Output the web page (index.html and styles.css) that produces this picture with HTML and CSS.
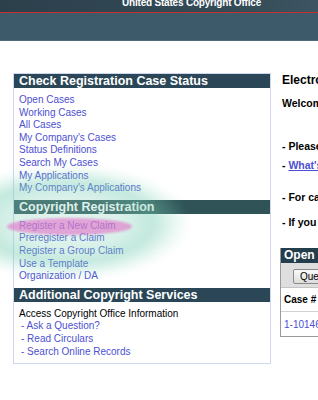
FILE: index.html
```html
<!DOCTYPE html>
<html lang="en">
<head>
  <meta charset="UTF-8" />
  <meta name="viewport" content="width=device-width, initial-scale=1.0"/>
  <title>eCO | United States Copyright Office</title>
  <link rel="stylesheet" href="styles.css">
</head>
<body>

  <!-- Banner -->
  <header class="banner">
    <div class="banner-top">
      <span class="banner-title">United States Copyright Office</span>
    </div>
    <div class="banner-bar"></div>
  </header>

  <div class="page">

    <!-- Left navigation -->
    <aside class="nav">
      <h3 class="nav-head">Check Registration Case Status</h3>
      <ul class="nav-list">
        <li><a href="#">Open Cases</a></li>
        <li><a href="#">Working Cases</a></li>
        <li><a href="#">All Cases</a></li>
        <li><a href="#">My Company's Cases</a></li>
        <li><a href="#">Status Definitions</a></li>
        <li><a href="#">Search My Cases</a></li>
        <li><a href="#">My Applications</a></li>
        <li><a href="#">My Company's Applications</a></li>
      </ul>

      <h3 class="nav-head nav-head-lit">Copyright Registration</h3>
      <ul class="nav-list">
        <li><a href="#">Register a New Claim</a></li>
        <li><a href="#">Preregister a Claim</a></li>
        <li><a href="#">Register a Group Claim</a></li>
        <li><a href="#">Use a Template</a></li>
        <li><a href="#">Organization / DA</a></li>
      </ul>

      <h3 class="nav-head">Additional Copyright Services</h3>
      <ul class="nav-list">
        <li class="nav-note">Access Copyright Office Information</li>
        <li class="nav-sub"><a href="#">- Ask a Question?</a></li>
        <li class="nav-sub"><a href="#">- Read Circulars</a></li>
        <li class="nav-sub"><a href="#">- Search Online Records</a></li>
      </ul>
    </aside>

    <!-- Main content -->
    <main class="content">
      <h2 class="content-title">Electronic Copyright Office</h2>
      <p class="welcome">Welcome to the Electronic Copyright Office (eCO)</p>

      <p class="note note-first">- Please disable pop-up blockers before using eCO.</p>
      <p class="note note-link">- <a href="#">What's new in eCO</a></p>
      <p class="note note-gap">- For case status, select Open Cases from the menu.</p>
      <p class="note">- If you have questions, contact the Copyright Office.</p>

      <div class="cases">
        <div class="cases-head">Open Cases</div>
        <div class="cases-tools">
          <button type="button">Query</button>
        </div>
        <div class="cases-row cases-row-head">
          <span class="col-case">Case #</span>
          <span>Title</span>
        </div>
        <div class="cases-row">
          <a class="col-case" href="#">1-101468231</a>
          <span>Untitled Work</span>
        </div>
      </div>
    </main>

  </div>

  <!-- Highlight overlays -->
  <div class="glow"></div>
  <div class="marker"></div>

</body>
</html>
```

FILE: styles.css
```css
* {
  box-sizing: border-box;
}

body, html {
  margin: 0;
  padding: 0;
  font-family: 'Liberation Sans', Arial, sans-serif;
  overflow: hidden;
  position: relative;
  color: #000;
  background: #fff;
}

a {
  color: #4d4fd2;
  text-decoration: none;
}

/* Banner */
.banner {
  width: 640px;
}

.banner-top {
  height: 13px;
  overflow: hidden;
  background: linear-gradient(90deg, #2c404c 0%, #354c59 40%, #4a6270 65%, #33495a 85%, #2e4452 100%);
  border-bottom: 1px solid #c8302c;
}

.banner-title {
  display: block;
  padding-left: 122px;
  margin-top: -2px;
  font-size: 10px;
  line-height: 10px;
  font-weight: bold;
  color: #fff;
  letter-spacing: -0.2px;
}

.banner-bar {
  height: 28px;
  background: #3d5a6a;
  border-bottom: 1px solid #4d6a7a;
}

/* Layout */
.page {
  display: flex;
  gap: 11px;
  padding: 32px 0 0 13px;
  width: 700px;
}

/* Left navigation */
.nav {
  width: 258px;
  flex: none;
  border: 1px solid #cfd6ef;
  background: #fff;
}

.nav-head {
  margin: 0;
  height: 14px;
  line-height: 14px;
  padding-left: 5px;
  background: #2b4757;
  color: #fff;
  font-size: 12.5px;
  font-weight: bold;
  white-space: nowrap;
}

.nav-head-lit {
  background: #2f5357;
}

.nav-list {
  list-style: none;
  margin: 0;
  padding: 6px 5px 5px;
  font-size: 10px;
  line-height: 12.6px;
}

.nav-note {
  color: #000;
}

.nav-sub {
  padding-left: 2px;
}

/* Right content */
.content {
  width: 380px;
  flex: none;
  white-space: nowrap;
}

.content-title {
  margin: 0;
  font-size: 12px;
  line-height: 15px;
}

.welcome {
  margin: 9px 0 0;
  font-size: 10.5px;
  line-height: 13px;
  font-weight: bold;
}

.note {
  margin: 12px 0 0;
  font-size: 10.5px;
  line-height: 13px;
  font-weight: bold;
}

.note-first {
  margin-top: 30px;
}

.note-link {
  margin-top: 6px;
}

.note-link a {
  text-decoration: underline;
}

.note-gap {
  margin-top: 19px;
}

/* Open cases table */
.cases {
  margin-top: 19px;
  margin-left: -2px;
  width: 330px;
  border: 1px solid #9a9a9a;
  border-top: none;
}

.cases-head {
  height: 15px;
  line-height: 15px;
  padding-left: 3px;
  background: #243e4c;
  color: #fff;
  font-size: 12px;
  font-weight: bold;
}

.cases-tools {
  padding: 3px 12px;
  background: #dedede;
  border-bottom: 1px solid #c4c4c4;
}

.cases-tools button {
  font-family: 'Liberation Sans', Arial, sans-serif;
  font-size: 10px;
  height: 15px;
  padding: 0 6px;
  border: 1px solid #8a8a8a;
  border-radius: 2px;
  background: linear-gradient(#fafafa, #dcdcdc);
  color: #000;
}

.cases-row {
  display: flex;
  align-items: center;
  height: 24px;
  padding-left: 3px;
  font-size: 10px;
  border-bottom: 1px solid #d2d2d2;
}

.cases-row:last-child {
  border-bottom: none;
}

.cases-row-head {
  font-weight: bold;
}

.col-case {
  width: 80px;
}

/* Highlight overlays */
.glow {
  position: absolute;
  left: -55px;
  top: 165px;
  width: 245px;
  height: 115px;
  border-radius: 50%;
  background: radial-gradient(ellipse closest-side, rgba(150, 215, 195, 0.28) 0%, rgba(140, 212, 190, 0.32) 45%, rgba(120, 205, 180, 0.45) 70%, rgba(140, 215, 190, 0.18) 88%, rgba(140, 215, 190, 0) 100%);
  filter: blur(3px);
  pointer-events: none;
}

.marker {
  position: absolute;
  left: 7px;
  top: 218px;
  width: 125px;
  height: 17px;
  border-radius: 50%;
  background: rgba(226, 115, 200, 0.62);
  filter: blur(0.8px);
  pointer-events: none;
}
```
